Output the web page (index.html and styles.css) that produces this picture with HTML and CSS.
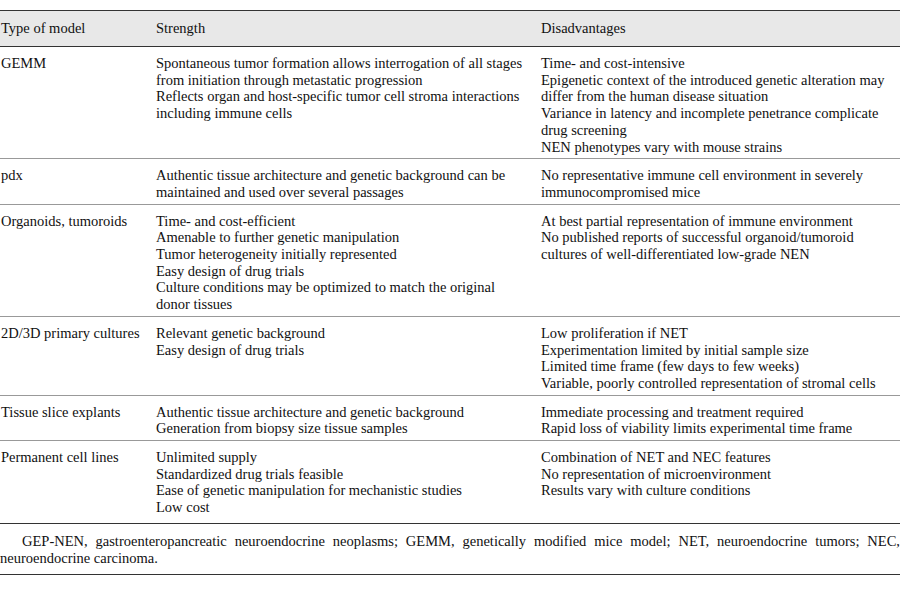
FILE: index.html
```html
<!DOCTYPE html>
<html lang="en">
<head>
    <meta charset="UTF-8">
    <title>Models</title>
    <link rel="stylesheet" href="styles.css">
</head>
<body>
  <div class="wrap">
    <table class="models">
      <thead>
        <tr>
          <th class="c1">Type of model</th>
          <th class="c2">Strength</th>
          <th class="c3">Disadvantages</th>
        </tr>
      </thead>
      <tbody>
        <tr>
          <td>GEMM</td>
          <td>Spontaneous tumor formation allows interrogation of all stages<br>from initiation through metastatic progression<br>Reflects organ and host-specific tumor cell stroma interactions<br>including immune cells</td>
          <td>Time- and cost-intensive<br>Epigenetic context of the introduced genetic alteration may<br>differ from the human disease situation<br>Variance in latency and incomplete penetrance complicate<br>drug screening<br>NEN phenotypes vary with mouse strains</td>
        </tr>
        <tr>
          <td>pdx</td>
          <td>Authentic tissue architecture and genetic background can be<br>maintained and used over several passages</td>
          <td>No representative immune cell environment in severely<br>immunocompromised mice</td>
        </tr>
        <tr>
          <td>Organoids, tumoroids</td>
          <td>Time- and cost-efficient<br>Amenable to further genetic manipulation<br>Tumor heterogeneity initially represented<br>Easy design of drug trials<br>Culture conditions may be optimized to match the original<br>donor tissues</td>
          <td>At best partial representation of immune environment<br>No published reports of successful organoid/tumoroid<br>cultures of well-differentiated low-grade NEN</td>
        </tr>
        <tr>
          <td>2D/3D primary cultures</td>
          <td>Relevant genetic background<br>Easy design of drug trials</td>
          <td>Low proliferation if NET<br>Experimentation limited by initial sample size<br>Limited time frame (few days to few weeks)<br>Variable, poorly controlled representation of stromal cells</td>
        </tr>
        <tr>
          <td>Tissue slice explants</td>
          <td>Authentic tissue architecture and genetic background<br>Generation from biopsy size tissue samples</td>
          <td>Immediate processing and treatment required<br>Rapid loss of viability limits experimental time frame</td>
        </tr>
        <tr class="last">
          <td>Permanent cell lines</td>
          <td>Unlimited supply<br>Standardized drug trials feasible<br>Ease of genetic manipulation for mechanistic studies<br>Low cost</td>
          <td>Combination of NET and NEC features<br>No representation of microenvironment<br>Results vary with culture conditions</td>
        </tr>
      </tbody>
    </table>
    <p class="note">GEP-NEN, gastroenteropancreatic neuroendocrine neoplasms; GEMM, genetically modified mice model; NET, neuroendocrine tumors; NEC, neuroendocrine carcinoma.</p>
  </div>
</body>
</html>
```
FILE: styles.css
```css
body {
	margin: 0;
	background: #fff;
	color: #111;
	font-family: "Liberation Serif", "Times New Roman", serif;
	font-size: 14.5px;
	line-height: 16.7px;
}
.wrap {
	padding-top: 10px;
	width: 900px;
}
.models {
	width: 900px;
	border-collapse: collapse;
	border-top: 1.5px solid #333;
	table-layout: fixed;
}
.models th {
	background: #e8e8e8;
	font-weight: normal;
	text-align: left;
	height: 35px;
	padding: 0;
	border-bottom: 1.5px solid #333;
}
.models td {
	vertical-align: top;
	white-space: nowrap;
	padding: 8px 0 3px 0;
	border-bottom: 1.5px solid #999;
}
.models tr.last td {
	padding-bottom: 7px;
	border-bottom: 1.5px solid #333;
}
.c1 { width: 155px; }
.c2 { width: 385px; }
.models th:first-child, .models td:first-child {
	padding-left: 1px;
}
.note {
	margin: 0;
	padding: 9px 0 8px 0;
	text-indent: 22px;
	text-align: justify;
	border-bottom: 1.5px solid #333;
}
```
